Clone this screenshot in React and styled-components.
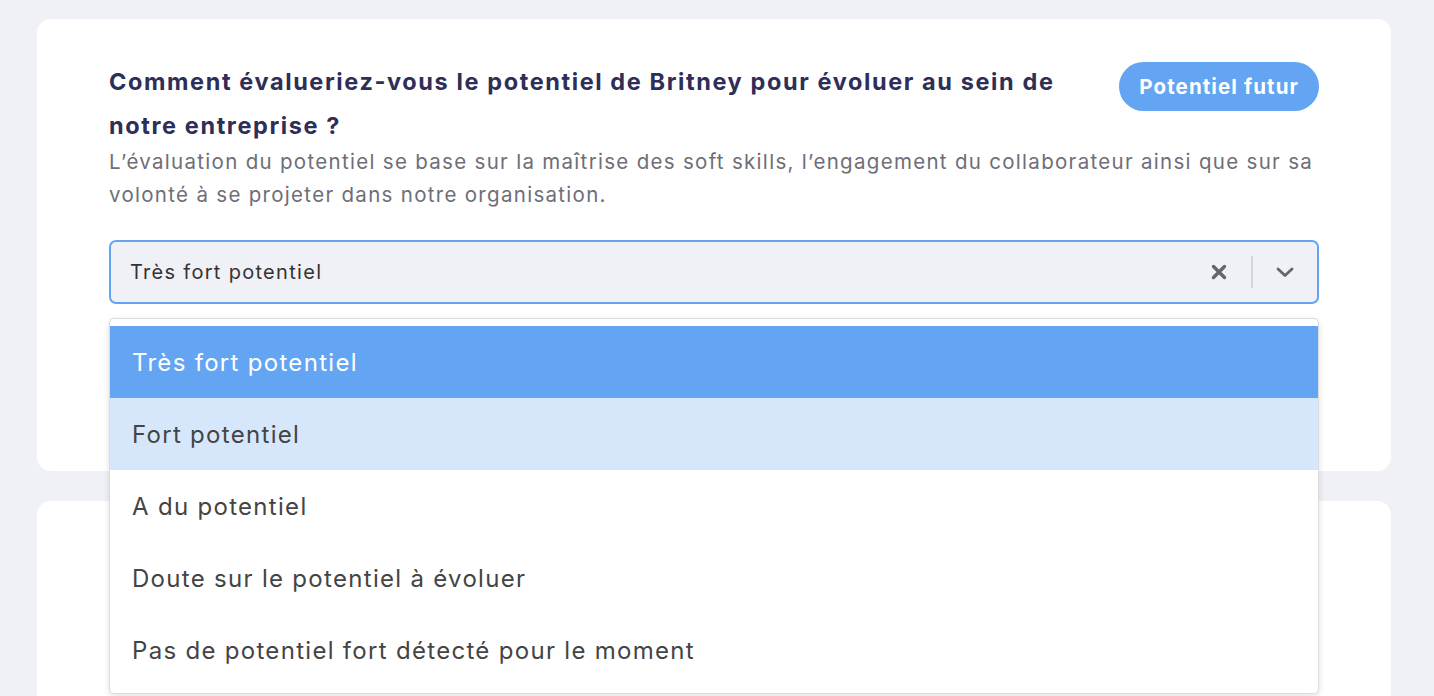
import React, { useState } from "react";
import styled, { createGlobalStyle } from "styled-components";

const GlobalStyle = createGlobalStyle`
  html, body {
    margin: 0;
    padding: 0;
    background: #f0f1f6;
    font-family: "Inter", "Noto Sans", sans-serif;
    overflow: hidden;
  }
`;

const OPTIONS = [
  "Très fort potentiel",
  "Fort potentiel",
  "A du potentiel",
  "Doute sur le potentiel à évoluer",
  "Pas de potentiel fort détecté pour le moment",
];

const ClearIcon = () => (
  <svg width="18" height="18" viewBox="0 0 18 18">
    <path
      d="M3.5 3.5 L14.5 14.5 M14.5 3.5 L3.5 14.5"
      stroke="#666"
      strokeWidth="3.4"
      strokeLinecap="round"
    />
  </svg>
);

const ChevronIcon = () => (
  <svg width="22" height="22" viewBox="0 0 22 22">
    <path
      d="M4 8 L11 14.5 L18 8"
      stroke="#666"
      strokeWidth="2.8"
      fill="none"
      strokeLinecap="round"
      strokeLinejoin="round"
    />
  </svg>
);

export default function App() {
  const [value] = useState(OPTIONS[0]);
  const [hover, setHover] = useState(1);

  return (
    <Page>
      <GlobalStyle />
      <Card>
        <Header>
          <Title>
            Comment évalueriez-vous le potentiel de Britney pour évoluer au sein
            de notre entreprise ?
          </Title>
          <Pill>Potentiel futur</Pill>
        </Header>
        <Description>
          L’évaluation du potentiel se base sur la maîtrise des soft skills,
          l’engagement du collaborateur ainsi que sur sa volonté à se projeter
          dans notre organisation.
        </Description>
        <SelectWrap>
          <Control>
            <Value>{value}</Value>
            <Indicators>
              <IconButton>
                <ClearIcon />
              </IconButton>
              <Separator />
              <IconButton>
                <ChevronIcon />
              </IconButton>
            </Indicators>
          </Control>
          <Menu>
            {OPTIONS.map((opt, i) => (
              <Option
                key={opt}
                $selected={opt === value}
                $hover={i === hover}
                onMouseEnter={() => setHover(i)}
              >
                {opt}
              </Option>
            ))}
          </Menu>
        </SelectWrap>
      </Card>
      <Card $tall />
    </Page>
  );
}

const Page = styled.div`
  display: flex;
  flex-direction: column;
  gap: 30px;
  padding: 19px 43px 0 37px;
  height: 696px;
  box-sizing: border-box;
`;

const Card = styled.div`
  background: #ffffff;
  border-radius: 14px;
  padding: ${(p) => (p.$tall ? "0" : "41px 72px 167px 72px")};
  min-height: ${(p) => (p.$tall ? "300px" : "auto")};
  flex-shrink: 0;
`;

const Header = styled.div`
  display: flex;
  justify-content: space-between;
  align-items: flex-start;
  gap: 40px;
`;

const Title = styled.h2`
  margin: 0;
  flex: 1;
  font-size: 23.5px;
  line-height: 44px;
  font-weight: 700;
  color: #2e2e57;
  letter-spacing: 1.6px;
`;

const Pill = styled.span`
  flex-shrink: 0;
  margin-top: 2px;
  height: 49px;
  padding: 0 20px;
  display: flex;
  align-items: center;
  border-radius: 25px;
  background: #63a5f2;
  color: #ffffff;
  font-size: 20.5px;
  font-weight: 700;
  letter-spacing: 1.1px;
`;

const Description = styled.p`
  margin: -3px 0 0;
  font-size: 20.5px;
  line-height: 33px;
  color: #6e6e78;
  letter-spacing: 1.3px;
`;

const SelectWrap = styled.div`
  position: relative;
  margin-top: 29px;
`;

const Control = styled.div`
  height: 64px;
  box-sizing: border-box;
  display: flex;
  align-items: center;
  background: #f0f1f6;
  border: 2px solid #63a5f2;
  border-radius: 7px;
  padding: 0 0 0 19px;
`;

const Value = styled.div`
  flex: 1;
  font-size: 20px;
  color: #333333;
  letter-spacing: 1.3px;
`;

const Indicators = styled.div`
  display: flex;
  align-items: center;
  height: 100%;
`;

const IconButton = styled.div`
  display: flex;
  align-items: center;
  justify-content: center;
  width: 64px;
  height: 100%;
`;

const Separator = styled.span`
  width: 2px;
  height: 32px;
  background: #d6d6d8;
`;

const Menu = styled.div`
  position: absolute;
  top: 78px;
  left: 0;
  right: 0;
  background: #ffffff;
  border: 1px solid #dcdcdc;
  border-radius: 5px;
  box-shadow: 0 2px 6px rgba(0, 0, 0, 0.12);
  padding: 7px 0 7px;
  z-index: 10;
`;

const Option = styled.div`
  height: 72px;
  display: flex;
  align-items: center;
  padding: 0 22px;
  font-size: 24px;
  color: ${(p) => (p.$selected ? "#ffffff" : "#444444")};
  background: ${(p) =>
    p.$selected ? "#63a5f2" : p.$hover ? "#d6e7fc" : "transparent"};
  letter-spacing: 1.3px;
  cursor: default;
`;
